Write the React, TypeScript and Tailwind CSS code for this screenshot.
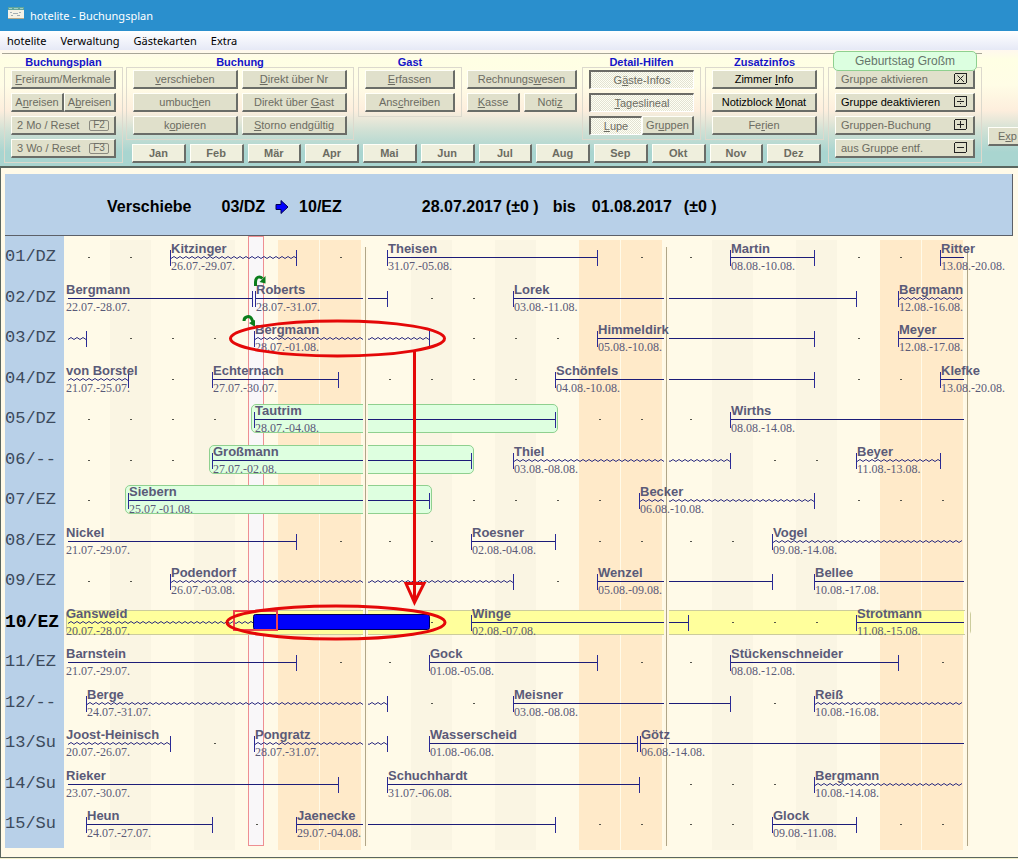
import type { ReactNode } from 'react';
import clsx from 'clsx';

interface Booking {
  name?: string;
  from: string;
  to: string;
  wavy?: boolean;
  group?: boolean;
}

interface Room {
  id: string;
  bookings: Booking[];
  target?: boolean;
}

const rooms: Room[] = [
  {
    id: '01/DZ',
    bookings: [
      { name: 'Kitzinger', from: '26.07.', to: '29.07.', wavy: true },
      { name: 'Theisen', from: '31.07.', to: '05.08.' },
      { name: 'Martin', from: '08.08.', to: '10.08.' },
      { name: 'Ritter', from: '13.08.', to: '20.08.' },
    ],
  },
  {
    id: '02/DZ',
    bookings: [
      { name: 'Bergmann', from: '22.07.', to: '28.07.' },
      { name: 'Roberts', from: '28.07.', to: '31.07.' },
      { name: 'Lorek', from: '03.08.', to: '11.08.' },
      { name: 'Bergmann', from: '12.08.', to: '16.08.', wavy: true },
    ],
  },
  {
    id: '03/DZ',
    bookings: [
      { from: '20.07.', to: '24.07.', wavy: true },
      { name: 'Bergmann', from: '28.07.', to: '01.08.', wavy: true },
      { name: 'Himmeldirk', from: '05.08.', to: '10.08.' },
      { name: 'Meyer', from: '12.08.', to: '17.08.' },
    ],
  },
  {
    id: '04/DZ',
    bookings: [
      { name: 'von Borstel', from: '21.07.', to: '25.07.', wavy: true },
      { name: 'Echternach', from: '27.07.', to: '30.07.' },
      { name: 'Schönfels', from: '04.08.', to: '10.08.' },
      { name: 'Klefke', from: '13.08.', to: '20.08.' },
    ],
  },
  {
    id: '05/DZ',
    bookings: [
      { name: 'Tautrim', from: '28.07.', to: '04.08.', group: true },
      { name: 'Wirths', from: '08.08.', to: '14.08.' },
    ],
  },
  {
    id: '06/--',
    bookings: [
      { name: 'Großmann', from: '27.07.', to: '02.08.', group: true },
      { name: 'Thiel', from: '03.08.', to: '08.08.', wavy: true },
      { name: 'Beyer', from: '11.08.', to: '13.08.', wavy: true },
    ],
  },
  {
    id: '07/EZ',
    bookings: [
      { name: 'Siebern', from: '25.07.', to: '01.08.', group: true },
      { name: 'Becker', from: '06.08.', to: '10.08.', wavy: true },
    ],
  },
  {
    id: '08/EZ',
    bookings: [
      { name: 'Nickel', from: '21.07.', to: '29.07.' },
      { name: 'Roesner', from: '02.08.', to: '04.08.' },
      { name: 'Vogel', from: '09.08.', to: '14.08.', wavy: true },
    ],
  },
  {
    id: '09/EZ',
    bookings: [
      { name: 'Podendorf', from: '26.07.', to: '03.08.', wavy: true },
      { name: 'Wenzel', from: '05.08.', to: '09.08.' },
      { name: 'Bellee', from: '10.08.', to: '17.08.' },
    ],
  },
  {
    id: '10/EZ',
    target: true,
    bookings: [
      { name: 'Gansweid', from: '20.07.', to: '28.07.', wavy: true },
      { name: 'Winge', from: '02.08.', to: '07.08.' },
      { name: 'Strotmann', from: '11.08.', to: '15.08.' },
    ],
  },
  {
    id: '11/EZ',
    bookings: [
      { name: 'Barnstein', from: '21.07.', to: '29.07.' },
      { name: 'Gock', from: '01.08.', to: '05.08.' },
      { name: 'Stückenschneider', from: '08.08.', to: '12.08.' },
    ],
  },
  {
    id: '12/--',
    bookings: [
      { name: 'Berge', from: '24.07.', to: '31.07.', wavy: true },
      { name: 'Meisner', from: '03.08.', to: '08.08.' },
      { name: 'Reiß', from: '10.08.', to: '16.08.', wavy: true },
    ],
  },
  {
    id: '13/Su',
    bookings: [
      { name: 'Joost-Heinisch', from: '20.07.', to: '26.07.', wavy: true },
      { name: 'Pongratz', from: '28.07.', to: '31.07.', wavy: true },
      { name: 'Wasserscheid', from: '01.08.', to: '06.08.' },
      { name: 'Götz', from: '06.08.', to: '14.08.' },
    ],
  },
  {
    id: '14/Su',
    bookings: [
      { name: 'Rieker', from: '23.07.', to: '30.07.' },
      { name: 'Schuchhardt', from: '31.07.', to: '06.08.' },
      { name: 'Bergmann', from: '10.08.', to: '14.08.', wavy: true },
    ],
  },
  {
    id: '15/Su',
    bookings: [
      { name: 'Heun', from: '24.07.', to: '27.07.' },
      { name: 'Jaenecke', from: '29.07.', to: '04.08.' },
      { name: 'Glock', from: '09.08.', to: '11.08.' },
    ],
  },
];

const months = ['Jan', 'Feb', 'Mär', 'Apr', 'Mai', 'Jun', 'Jul', 'Aug', 'Sep', 'Okt', 'Nov', 'Dez'];

// The plan shows three weeks, starting on Monday 24.07.
const DAYS = 21;
const DAY_WIDTH = 42;
const WEEK_GAP = 7;
const TRACK_START = 4;
const TRACK_END = 899;

function dayIndex(date: string) {
  const [day, month] = date.split('.').map(Number);
  return day - 24 + (month === 8 ? 31 : 0);
}

function dayX(index: number) {
  return 22 + index * DAY_WIDTH + Math.floor(index / 7) * WEEK_GAP;
}

function wavePoints(width: number) {
  const points: string[] = [];
  for (let x = 0, i = 0; x <= width; x += 3, i++) {
    points.push(`${x},${i % 2 === 0 ? 3.5 : 1.5}`);
  }
  return points.join(' ');
}

function Accel({ text }: { text: string }) {
  const at = text.indexOf('&');
  if (at < 0) return <>{text}</>;
  return (
    <>
      {text.slice(0, at)}
      <u className="underline-offset-1">{text[at + 1]}</u>
      {text.slice(at + 2)}
    </>
  );
}

interface ToolButtonProps {
  label: string;
  className?: string;
  active?: boolean;
  pressed?: boolean;
  icon?: ReactNode;
}

function ToolButton({ label, className, active, pressed, icon }: ToolButtonProps) {
  return (
    <button
      type="button"
      aria-pressed={pressed}
      className={clsx(
        'flex h-[19px] shrink-0 items-center whitespace-nowrap text-[11px] leading-none',
        icon ? 'justify-between px-[5px]' : 'justify-center',
        active ? 'text-black' : 'text-[#6c6c62]',
        pressed
          ? 'border-t-2 border-l-2 border-r border-b border-t-[#6b6b66] border-l-[#6b6b66] border-r-white border-b-white bg-[repeating-conic-gradient(#e2e2d2_0_25%,#fffff4_0_50%)] bg-[length:2px_2px]'
          : 'border-t border-l border-r-2 border-b-2 border-t-[#fffff8] border-l-[#fffff8] border-r-[#6a6d68] border-b-[#6a6d68] bg-[#e0e0cb]',
        className
      )}
    >
      <span>
        <Accel text={label} />
      </span>
      {icon}
    </button>
  );
}

function Group({ title, children, className }: { title?: string; children: ReactNode; className?: string }) {
  return (
    <section className="relative shrink-0">
      <h2 className="h-[13px] text-center text-[11px] leading-[16px] font-bold text-[#1414c8]">{title}</h2>
      <div className={clsx('flex flex-col gap-1 border border-[#dcd9cd] px-[6px] pt-[2px] pb-1', className)}>
        {children}
      </div>
    </section>
  );
}

function KeyHint({ text }: { text: string }) {
  return (
    <kbd className="flex h-[11px] w-5 items-center justify-center rounded-[2px] border border-[#8a8a80] font-['Liberation_Sans',sans-serif] text-[10px] leading-none">
      {text}
    </kbd>
  );
}

function SymbolBox({ kind }: { kind: 'cross' | 'divide' | 'plus' | 'minus' }) {
  return (
    <svg className="h-[12px] w-[14px]" viewBox="0 0 14 12" fill="none" stroke="#222" shapeRendering="crispEdges">
      <rect x="0.5" y="0.5" width="12" height="10" rx="1.5" />
      {kind === 'cross' && <path d="M3.5 2.5l6.5 6.5M9.5 2.5L3 9" shapeRendering="auto" />}
      {kind === 'divide' && <path d="M3 5.5h7M6 3.5h1M6 7.5h1" />}
      {kind === 'plus' && <path d="M3 5.5h7M6.5 2v7" />}
      {kind === 'minus' && <path d="M3 5.5h7" />}
    </svg>
  );
}

function TitleBar() {
  return (
    <header className="flex h-[31px] shrink-0 items-center gap-[6px] bg-[#2a8fcd] pl-2 text-white">
      <svg className="mb-[5px] h-[12px] w-4" viewBox="0 0 16 12">
        <rect width="16" height="12" fill="#f4f1e6" />
        <rect width="16" height="3" fill="#5fa59c" />
        <path d="M1 1.5h3M6 1.5h4M12 1.5h3" stroke="#a0cfc6" />
        <path d="M2 5.5h2M11 5.5h2M5 6.5h5M3 8.5h2M9 8.5h3" stroke="#a4aeb4" />
        <path d="M0 11.5h16" stroke="#b8a888" />
      </svg>
      <h1 className="pt-px font-['Noto_Sans',sans-serif] text-[11px]">hotelite - Buchungsplan</h1>
    </header>
  );
}

function MenuBar() {
  return (
    <nav className="flex h-[19px] shrink-0 items-center gap-[14px] bg-linear-to-b from-white to-[#e6e9f6] pt-[2px] pl-[7px] font-['Noto_Sans',sans-serif] text-[11px] text-black">
      <a href="#hotelite">hotelite</a>
      <a href="#verwaltung">Verwaltung</a>
      <a href="#gaestekarten">Gästekarten</a>
      <a href="#extra">Extra</a>
    </nav>
  );
}

function Toolbar() {
  return (
    <div className="flex h-[116px] shrink-0 items-start gap-[6px] overflow-hidden bg-[linear-gradient(#fff8ee_0%,#ffffe4_8%,#fffde6_30%,#fdeedd_52%,#cfe0d4_70%,#a9d5d0_88%,#a9d5d0_100%)] pt-[3px] pl-[2px]">
      <div className="flex shrink-0 items-start border-t border-[#a8a698] pl-[2px]">
        <Group title="Buchungsplan">
          <ToolButton label="&Freiraum/Merkmale" />
          <div className="flex">
            <ToolButton label="A&nreisen" className="w-[53px]" />
            <ToolButton label="A&breisen" className="w-[52px]" />
          </div>
          <ToolButton label="2 Mo / Reset" icon={<KeyHint text="F2" />} />
          <ToolButton label="3 Wo / Reset" icon={<KeyHint text="F3" />} />
        </Group>

        <div className="ml-[3px] flex shrink-0 flex-col gap-1">
          <div className="flex items-start gap-1">
            <Group title="Buchung" className="grid! grid-cols-[105px_105px]">
              <ToolButton label="&verschieben" />
              <ToolButton label="&Direkt über Nr" />
              <ToolButton label="umbuc&hen" />
              <ToolButton label="Direkt über &Gast" />
              <ToolButton label="k&opieren" />
              <ToolButton label="&Storno endgültig" />
            </Group>
            <Group title="Gast">
              <ToolButton label="&Erfassen" className="w-[90px]" />
              <ToolButton label="Ans&chreiben" className="w-[90px]" />
            </Group>
            <Group className="border-transparent px-0!">
              <ToolButton label="Rechnungs&wesen" className="w-[110px]" />
              <div className="flex gap-1">
                <ToolButton label="&Kasse" className="w-[53px]" />
                <ToolButton label="Noti&z" className="w-[53px]" />
              </div>
            </Group>
            <Group title="Detail-Hilfen">
              <ToolButton label="G&äste-Infos" pressed />
              <ToolButton label="&Tageslineal" pressed />
              <div className="flex">
                <ToolButton label="&Lupe" pressed className="w-[53px]" />
                <ToolButton label="Gr&uppen" className="w-[52px]" />
              </div>
            </Group>
            <Group title="Zusatzinfos">
              <ToolButton label="Zimmer &Info" active className="w-[105px]" />
              <ToolButton label="Notizblock &Monat" active />
              <ToolButton label="Fe&rien" />
            </Group>
          </div>
          <div className="grid grid-cols-12 gap-1 pr-[3px] pl-[6px]">
            {months.map((month) => (
              <ToolButton key={month} label={month} className="bg-[#efefdd]! font-bold" />
            ))}
          </div>
        </div>

        <div className="ml-1">
          <Group>
            <span className="absolute -top-[3px] right-[5px] left-[5px] h-5 rounded-[5px] border border-[#8fd08f] bg-[#dcffe0] text-center text-xs leading-[18px] text-[#66756a]">
              Geburtstag Großm
            </span>
            <ToolButton label="Gruppe aktivieren" className="w-[140px]" icon={<SymbolBox kind="cross" />} />
            <ToolButton label="Gruppe deaktivieren" active icon={<SymbolBox kind="divide" />} />
            <ToolButton label="Gruppen-Buchung" icon={<SymbolBox kind="plus" />} />
            <ToolButton label="aus Gruppe entf." icon={<SymbolBox kind="minus" />} />
          </Group>
        </div>
      </div>
      <ToolButton label="E&xp" className="mt-[74px] w-[40px]" />
    </div>
  );
}

function MoveHeader() {
  return (
    <div className="mr-[5px] ml-1 flex h-[62px] items-center border-r border-b border-[#5c6068] bg-[#b8d0e8] pt-1 pl-[102px] text-base font-bold whitespace-pre text-black">
      <span>Verschiebe</span>
      <span className="ml-[30px]">03/DZ</span>
      <svg className="mx-[10px] h-[14px] w-[14px]" viewBox="0 0 14 14">
        <path d="M1 4.500h5V.5L13 7l-7 6.500V9.500H1z" fill="#0000ff" stroke="#000050" />
      </svg>
      <span>10/EZ</span>
      <span className="ml-20">28.07.2017</span>
      <span className="ml-1">(±0 )</span>
      <span className="ml-[14px]">bis</span>
      <span className="ml-4">01.08.2017</span>
      <span className="ml-3">(±0 )</span>
    </div>
  );
}

function BookingBar({ booking, joinsPrev, joinsNext }: { booking: Booking; joinsPrev: boolean; joinsNext: boolean }) {
  const from = dayIndex(booking.from);
  const to = dayIndex(booking.to);
  const openStart = from < 0;
  const openEnd = to >= DAYS;
  const left = openStart ? TRACK_START : dayX(from) + (joinsPrev ? 1 : 0);
  const right = openEnd ? TRACK_END : dayX(to) - (joinsNext ? 2 : 0);
  const width = right - left;

  return (
    <>
      {booking.group && (
        <div
          className="absolute top-[5px] z-10 h-[29px] rounded-[5px] border border-[#8fd08f] bg-[#deffe0]"
          style={{ left: left - 3, width: width + 6 }}
        />
      )}
      <div
        className={clsx(
          'absolute top-[13px] z-10 h-4 border-[#2a2a96]',
          !openStart && 'border-l',
          !openEnd && 'border-r'
        )}
        style={{ left, width: width + 1 }}
      >
        {booking.wavy ? (
          <svg className="absolute top-[5px] left-0 h-[5px]" width={width} fill="none" stroke="#2c2c80">
            <polyline points={wavePoints(width)} />
          </svg>
        ) : (
          <div className="absolute top-[7px] h-px w-full bg-[#1c1c78]" />
        )}
      </div>
      {booking.name && (
        <div
          className="absolute top-[3px] z-30 whitespace-nowrap text-[#5a5a78]"
          style={{ left: openStart ? 2 : left + 1 }}
        >
          <p className="text-[13px] leading-[17px] font-bold">{booking.name}</p>
          <p className="font-['Liberation_Serif',serif] text-xs leading-[18px]">
            {booking.from}-{booking.to}
          </p>
        </div>
      )}
    </>
  );
}

function RoomRow({ room }: { room: Room }) {
  const spans = room.bookings.map((b) => [dayIndex(b.from), dayIndex(b.to)]);
  const freeDays = Array.from({ length: DAYS }, (_, i) => i).filter(
    (day) => !spans.some(([from, to]) => day >= from && day <= to)
  );

  return (
    <li className="flex odd:h-[41px] even:h-10">
      <div
        className={clsx(
          "w-[59px] shrink-0 font-['Liberation_Mono',monospace] leading-10",
          room.target ? 'text-[18px] font-bold text-black' : 'text-[17px] text-[#3c4a5c]'
        )}
      >
        {room.id}
      </div>
      <div className="relative flex-1">
        {room.target && (
          <div className="absolute top-2 left-[2px] z-10 h-[25px] w-[905px] rounded-[4px] border border-[#cccc9c]">
            <div className="h-full w-[897px] bg-[#ffff9c]" />
          </div>
        )}
        {freeDays.map((day) => (
          <span key={day} className="absolute top-5 z-10 h-px w-[2px] bg-[#55554c]" style={{ left: dayX(day) + 2 }} />
        ))}
        {room.bookings.map((booking, i) => (
          <BookingBar
            key={i}
            booking={booking}
            joinsPrev={i > 0 && room.bookings[i - 1].to === booking.from}
            joinsNext={room.bookings[i + 1]?.from === booking.to}
          />
        ))}
      </div>
    </li>
  );
}

function DayColumns() {
  return (
    <div className="absolute top-0 bottom-[2px] left-[63px] flex gap-[7px] pt-1">
      {[0, 1, 2].map((week) => (
        <div key={week} className="flex">
          {[0, 1, 2, 3, 4, 5, 6].map((day) => (
            <div
              key={day}
              className={clsx(
                'mr-px w-[41px]',
                day >= 5 && 'bg-[#ffeac9]',
                (day === 1 || day === 3) && 'bg-[#faf5e3]'
              )}
            />
          ))}
        </div>
      ))}
    </div>
  );
}

function WeekSeparators() {
  return (
    <div className="pointer-events-none absolute top-[11px] bottom-[6px] left-[358px] z-20 flex gap-[296px]">
      {[0, 1, 2].map((week) => (
        <div key={week} className="flex w-[5px] justify-center bg-[#fff8e4]">
          <div className="w-px bg-[#b0a688]" />
        </div>
      ))}
    </div>
  );
}

// Move preview: the blue bar, the source and target rings and the arrow between them.
function MoveOverlay() {
  return (
    <svg
      className="pointer-events-none absolute top-0 left-0 z-40 h-[612px] w-[970px]"
      viewBox="5 236 970 612"
      fill="none"
    >
      <rect x="253.500" y="614.500" width="176" height="15" rx="2" fill="#0000fa" stroke="#000050" />
      <rect x="234" y="611" width="43" height="19" stroke="#ee4450" strokeWidth="2" />
      <g stroke="#0b7d1b" strokeWidth="3">
        <path d="M255.500 286v-4c0-5 4-6.500 7-3.500" />
        <path d="M244 321c0-5 6-6 8-1.500l1.500 4" />
      </g>
      <path d="M265.500 276v7.500l-6-1.500z" fill="#0b7d1b" />
      <path d="M249 323l6-3v7z" fill="#0b7d1b" />
      <g stroke="#e40808" strokeWidth="3">
        <ellipse cx="337.500" cy="338.500" rx="107" ry="17.500" />
        <ellipse cx="336" cy="622.500" rx="109" ry="16.500" />
        <path d="M414.500 351v250" />
        <path d="M406 583.500h18l-9.500 19z" />
      </g>
    </svg>
  );
}

function BookingPlan() {
  return (
    <main className="flex-1 border-t-2 border-b border-l border-[#5a665f] bg-[#fffae8] pt-[6px]">
      <MoveHeader />
      <div className="relative ml-1 pb-[7px]">
        <div className="absolute top-0 bottom-1 left-0 w-[59px] bg-[#b8d0e8]" />
        <DayColumns />
        <div className="absolute top-0 bottom-[6px] left-[243px] w-4 border border-[#ee8f92] bg-[#f9f7f9]" />
        <ul className="relative pt-px">
          {rooms.map((room) => (
            <RoomRow key={room.id} room={room} />
          ))}
        </ul>
        <WeekSeparators />
        <MoveOverlay />
      </div>
    </main>
  );
}

export default function App() {
  return (
    <div className="flex min-h-screen flex-col overflow-hidden bg-[#f3efc8] pb-px font-['Liberation_Sans',sans-serif]">
      <TitleBar />
      <MenuBar />
      <Toolbar />
      <BookingPlan />
    </div>
  );
}
